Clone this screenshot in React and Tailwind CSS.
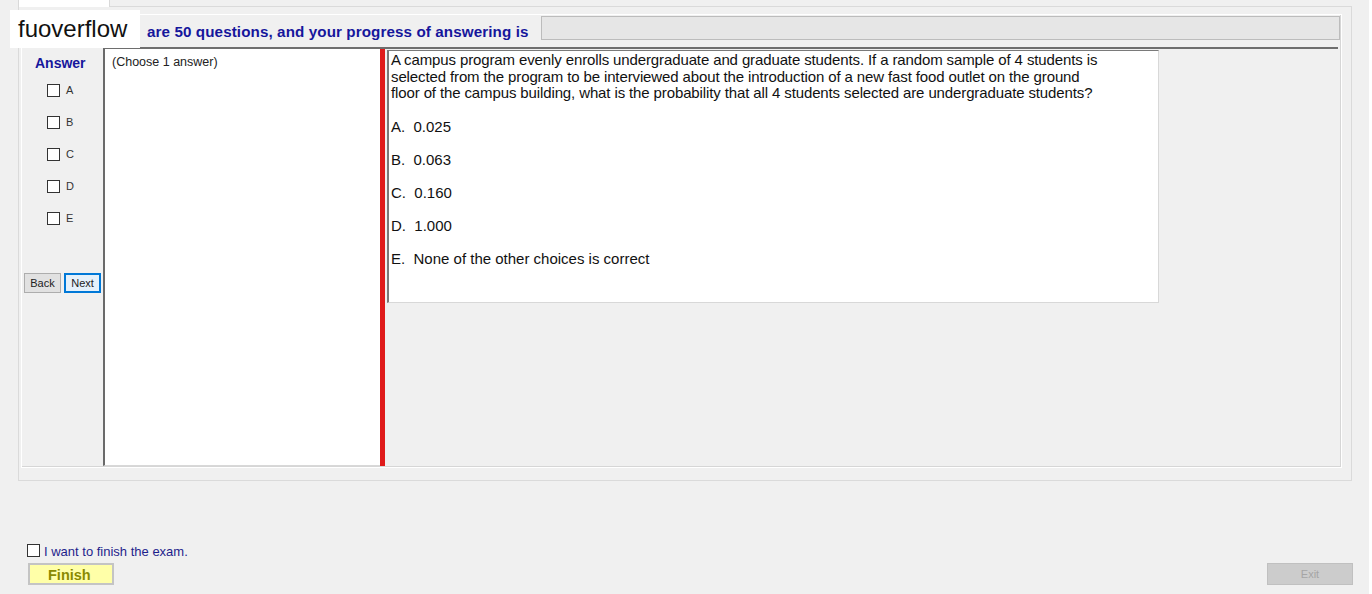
import React from "react";

const font = { fontFamily: '"Liberation Sans", Arial, sans-serif' };

function Box({ className = "" }) {
  return <div className={"w-[13px] h-[13px] border border-[#333333] bg-white " + className} />;
}

export default function App() {
  const letters = ["A", "B", "C", "D", "E"];
  const options = [
    "A.  0.025",
    "B.  0.063",
    "C.  0.160",
    "D.  1.000",
    "E.  None of the other choices is correct",
  ];
  return (
    <div
      className="relative w-[1372px] h-[594px] overflow-hidden bg-[#f0f0f0] border-r-[3px] border-white"
      style={font}
    >
      {/* tab strip */}
      <div className="pl-[18px]">
        <div className="h-[6px] flex">
          <div className="w-[92px] h-[7px] bg-white border-l border-r border-[#d9d9d9] relative z-10" />
        </div>
        {/* tab page */}
        <div className="w-[1334px] h-[475px] border border-[#dadada] bg-[#f0f0f0] pt-[8px] pl-[3px]">
          {/* group */}
          <div className="w-[1319px] h-[452px] border-r border-b border-[#d6d6d6] outline outline-1 outline-white flex flex-col">
            {/* header */}
            <div className="h-[32px] flex items-start shrink-0">
              <div className="w-[519px] pl-[125px] pt-[8px] text-[15.2px] font-bold text-[#16169c] whitespace-nowrap leading-[17px] tracking-[0.1px]">
                are 50 questions, and your progress of answering is
              </div>
              <div className="mt-[1px] w-[799px] h-[24px] bg-[#e6e6e6] border border-[#bcbcbc]" />
            </div>
            {/* content */}
            <div className="flex flex-1 min-h-0">
              {/* left column */}
              <div className="w-[81px] shrink-0 flex flex-col">
                <div className="pl-[13px] pt-[8px] text-[14px] font-bold text-[#16169c] leading-[16px]">Answer</div>
                <div className="flex flex-col gap-[19px] pt-[13px] pl-[25px]">
                  {letters.map((l) => (
                    <div key={l} className="flex items-center h-[13px]">
                      <Box />
                      <span className="ml-[6px] text-[11px] text-[#333] leading-[13px] -mt-[1px]">{l}</span>
                    </div>
                  ))}
                </div>
                <div className="flex gap-[3px] pl-[2px] mt-[48px]">
                  <div className="w-[37px] h-[20px] bg-[#e1e1e1] border border-[#adadad] text-[11px] text-[#222] flex items-center justify-center leading-none">
                    Back
                  </div>
                  <div className="w-[37px] h-[20px] bg-[#e5f1fb] border-2 border-[#0078d7] text-[11px] text-[#222] flex items-center justify-center leading-none">
                    Next
                  </div>
                </div>
              </div>
              {/* right content */}
              <div className="w-[1235px] border-t-2 border-[#6e6e6e] flex h-[419px]">
                <div className="w-[277px] h-full bg-white border-l-2 border-[#6a6a6a] border-b border-b-[#d8d8d8] pl-[7px] pt-[6px] text-[12.5px] text-[#222] leading-[14px]">
                  (Choose 1 answer)
                </div>
                <div className="w-[5px] h-full bg-[#e01b1b]" />
                <div className="ml-[2px] mt-[1px] w-[772px] h-[253px] bg-white border-l-2 border-t border-[#7a7a7a] border-r border-r-[#d8d8d8] border-b border-b-[#d8d8d8] pl-[2px] pt-[1px] text-[15px] text-[#111] whitespace-nowrap">
                  <div className="leading-[16.5px] tracking-[-0.12px]">
                    A campus program evenly enrolls undergraduate and graduate students. If a random sample of 4 students is
                    <br />
                    selected from the program to be interviewed about the introduction of a new fast food outlet on the ground
                    <br />
                    floor of the campus building, what is the probability that all 4 students selected are undergraduate students?
                  </div>
                  <div className="flex flex-col gap-[16px] pt-[16px]">
                    {options.map((o) => (
                      <div key={o} className="whitespace-pre leading-[17px]">{o}</div>
                    ))}
                  </div>
                </div>
              </div>
            </div>
          </div>
        </div>
      </div>

      {/* bottom area */}
      <div className="flex justify-between items-end pl-[27px] pr-[16px] pt-[62px]">
        <div className="flex flex-col">
          <div className="flex items-center h-[15px]">
            <Box className="bg-white" />
            <span className="ml-[4px] text-[13px] text-[#1e1e8c] leading-[15px] pt-[2px]">I want to finish the exam.</span>
          </div>
          <div className="ml-[1px] mt-[5px] w-[86px] h-[22px] bg-[#ffffa8] border-2 border-[#c4c4c4] text-[14.5px] font-bold text-[#8a8a00] flex items-center pl-[18px] pt-[2px] leading-none">
            Finish
          </div>
        </div>
        <div className="w-[86px] h-[22px] bg-[#cccccc] border border-[#c0c0c0] text-[11px] text-[#a5a5a5] flex items-center justify-center leading-none">
          Exit
        </div>
      </div>

      {/* watermark label */}
      <div className="absolute left-[10px] top-[10px] w-[130px] h-[38px] bg-white flex items-center pl-[8px] text-[24px] text-[#111] leading-none">
        fuoverflow
      </div>
    </div>
  );
}
